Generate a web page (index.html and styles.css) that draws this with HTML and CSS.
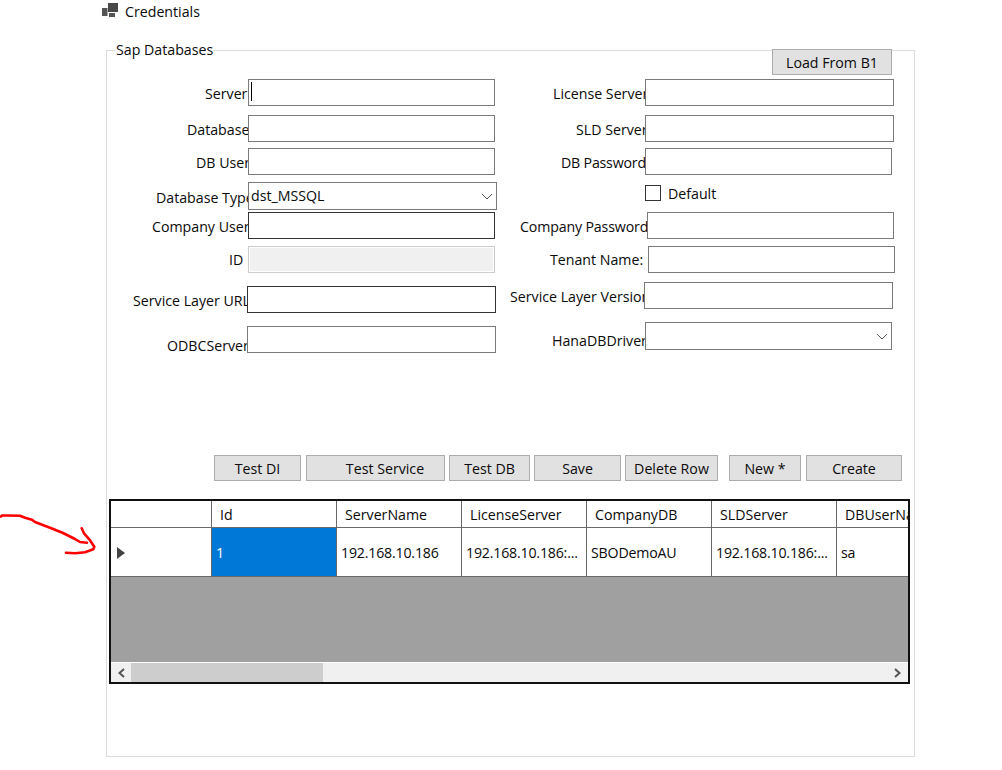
FILE: index.html
```html
<!DOCTYPE html>
<html lang="en">
<head>
<meta charset="utf-8">
<title>Credentials</title>
<link rel="stylesheet" href="styles.css">
</head>
<body>
<header class="title">
  <svg class="title-icon" width="16" height="15" viewBox="0 0 16 15"><path fill="#484848" d="M6 0h10v9H6z"/><path fill="#555" d="M0 5h5.500v8H0z"/><path fill="#555" d="M7 10h6v4H7z"/></svg>
  <span>Credentials</span>
</header>
<fieldset class="group">
  <legend>Sap Databases</legend>
  <div class="form">
    <div class="col col-left">
      <div class="row r-server"><label class="lbl">Server</label><input class="field"><span class="caret"></span></div>
      <div class="row r-database"><label class="lbl">Database</label><input class="field"></div>
      <div class="row r-dbuser"><label class="lbl">DB User</label><input class="field"></div>
      <div class="row r-type"><label class="lbl">Database Type</label><div class="field select"><span>dst_MSSQL</span><svg width="12" height="7" viewBox="0 0 12 7"><path d="M1 1l5 5 5-5" fill="none" stroke="#555" stroke-width="1"/></svg></div></div>
      <div class="row r-cuser"><label class="lbl">Company User</label><input class="field dark"></div>
      <div class="row r-id"><label class="lbl">ID</label><input class="field off" disabled></div>
      <div class="row r-url"><label class="lbl">Service Layer URL</label><input class="field dark"></div>
      <div class="row r-odbc"><label class="lbl">ODBCServer</label><input class="field"></div>
    </div>
    <div class="col col-right">
      <button class="btn load">Load From B1</button>
      <div class="row r-license"><label class="lbl">License Server</label><input class="field"></div>
      <div class="row r-sld"><label class="lbl">SLD Server</label><input class="field"></div>
      <div class="row r-dbpass"><label class="lbl">DB Password</label><input class="field"></div>
      <div class="check"><span class="box"></span><span class="check-text">Default</span></div>
      <div class="row r-cpass"><label class="lbl">Company Password</label><input class="field"></div>
      <div class="row r-tenant"><label class="lbl">Tenant Name:</label><input class="field"></div>
      <div class="row r-version"><label class="lbl">Service Layer Version</label><input class="field"></div>
      <div class="row r-hana"><label class="lbl">HanaDBDriver</label><div class="field select"><span></span><svg width="12" height="7" viewBox="0 0 12 7"><path d="M1 1l5 5 5-5" fill="none" stroke="#555" stroke-width="1"/></svg></div></div>
    </div>
  </div>
  <div class="actions">
    <button class="btn b-di">Test DI</button>
    <button class="btn b-service">Test Service</button>
    <button class="btn b-db">Test DB</button>
    <button class="btn b-save">Save</button>
    <button class="btn b-delete">Delete Row</button>
    <button class="btn b-new">New *</button>
    <button class="btn b-create">Create</button>
  </div>
  <div class="grid">
    <div class="grid-row head">
      <div class="cell rh"></div>
      <div class="cell">Id</div>
      <div class="cell">ServerName</div>
      <div class="cell">LicenseServer</div>
      <div class="cell">CompanyDB</div>
      <div class="cell">SLDServer</div>
      <div class="cell last">DBUserName</div>
    </div>
    <div class="grid-row data">
      <div class="cell rh"><span class="current"></span></div>
      <div class="cell selected">1</div>
      <div class="cell">192.168.10.186</div>
      <div class="cell">192.168.10.186:...</div>
      <div class="cell">SBODemoAU</div>
      <div class="cell">192.168.10.186:...</div>
      <div class="cell last">sa</div>
    </div>
    <div class="grid-empty"></div>
    <div class="hscroll">
      <span class="sb-btn"><svg width="9" height="10" viewBox="0 0 9 10"><path d="M7 1L2.500 5 7 9" fill="none" stroke="#555" stroke-width="2"/></svg></span>
      <span class="thumb"></span>
      <span class="sb-btn"><svg width="9" height="10" viewBox="0 0 9 10"><path d="M2 1l4.500 4L2 9" fill="none" stroke="#555" stroke-width="2"/></svg></span>
    </div>
  </div>
</fieldset>
<svg class="annotation" width="100" height="50" viewBox="0 0 100 50"><path d="M1 5.500 2 4.500 7 4.500 20 4.700 25 6.700 32 8.700 35 11 50 16.700 63 22 75 28 80 31 87 31.700M81.700 17.300 84 22.300 89.300 28.300 94.300 35.700 93.300 38.300 85 41.300 75 42.300 66 41.700" fill="none" stroke="#f00" stroke-width="2.600" stroke-linecap="round" stroke-linejoin="round"/></svg>
</body>
</html>
```
FILE: styles.css
```css
* { box-sizing: border-box; }
html, body { margin: 0; padding: 0; }
body {
  position: relative;
  width: 1002px;
  height: 770px;
  overflow: hidden;
  background: #fff;
  color: #0a0a0a;
  font: 14.200px/20px "Open Sans", "Noto Sans", sans-serif;
}
.title {
  display: flex;
  align-items: center;
  gap: 7px;
  height: 24px;
  margin-bottom: 16px;
  padding-left: 102px;
}
.title-icon { margin-top: -3px; }
.group {
  width: 809px;
  height: 717px;
  margin: 0 0 0 106px;
  padding: 0;
  min-inline-size: 0;
  border: 1px solid #dcdcdc;
}
.group legend { margin-left: 8px; padding: 0 1px; height: 20px; line-height: 20px; }
.form { display: flex; }
.col { flex: none; }
.col-left { width: 398px; }
.col-right { width: 400px; }
.row {
  position: relative;
  display: flex;
  align-items: flex-start;
  height: 27px;
  margin-top: var(--mt);
}
.lbl {
  flex: none;
  width: var(--lw);
  padding-left: var(--lp);
  padding-top: var(--lt);
  overflow: hidden;
  white-space: nowrap;
}
.field {
  flex: none;
  display: block;
  width: var(--fw, 247px);
  height: 27px;
  margin: 0;
  padding: 0;
  background: #fff;
  border: 1px solid #7a7a7a;
  border-radius: 0;
  outline: 0;
  font: inherit;
}
.field.dark { border-color: #333; }
.field.off { background: #f0f0f0; border-color: #ccc; box-shadow: inset 0 0 0 1px #fff; }
.select {
  display: flex;
  align-items: center;
  justify-content: space-between;
  height: 28px;
  padding: 0 3px 0 2px;
}
.select svg { margin-top: 1px; }
.caret { position: absolute; left: 144px; top: 3px; width: 1px; height: 19px; background: #000; }

.r-server   { --mt: 19px; --lw: 141px; --lp: 98px;  --lt: 5px; }
.r-database { --mt: 9px;  --lw: 141px; --lp: 80px;  --lt: 5px; }
.r-dbuser   { --mt: 6px;  --lw: 141px; --lp: 89px;  --lt: 5px; }
.r-type     { --mt: 7px;  --lw: 141px; --lp: 49px;  --lt: 6px; --fw: 249px; height: 28px; }
.r-cuser    { --mt: 2px;  --lw: 141px; --lp: 45px;  --lt: 5px; }
.r-id       { --mt: 7px;  --lw: 141px; --lp: 122px; --lt: 4px; }
.r-url      { --mt: 13px; --lw: 140px; --lp: 26px;  --lt: 5px; --fw: 249px; }
.r-odbc     { --mt: 13px; --lw: 140px; --lp: 60px;  --lt: 10px; --fw: 249px; }

.r-license  { --mt: 4px;  --lw: 140px; --lp: 48px;  --lt: 5px; --fw: 249px; }
.r-sld      { --mt: 9px;  --lw: 140px; --lp: 71px;  --lt: 5px; --fw: 249px; }
.r-dbpass   { --mt: 6px;  --lw: 140px; --lp: 56px;  --lt: 5px; --fw: 247px; letter-spacing: -0.2px; }
.r-cpass    { --mt: 11px; --lw: 142px; --lp: 15px;  --lt: 5px; --fw: 247px; letter-spacing: -0.15px; }
.r-tenant   { --mt: 7px;  --lw: 143px; --lp: 45px;  --lt: 4px; --fw: 247px; }
.r-version  { --mt: 9px;  --lw: 139px; --lp: 5px;   --lt: 5px; --fw: 249px; }
.r-hana     { --mt: 13px; --lw: 140px; --lp: 47px;  --lt: 9px; --fw: 247px; height: 28px; }

.check {
  display: flex;
  align-items: center;
  gap: 7px;
  height: 16px;
  margin: 10px 0 0 140px;
}
.check-text { padding-top: 2px; }
.box { width: 16px; height: 16px; border: 1px solid #333; background: #fff; }

.btn {
  display: block;
  height: 26px;
  padding: 2px 0 0;
  background: #e1e1e1;
  border: 1px solid #adadad;
  border-radius: 0;
  color: inherit;
  font: inherit;
}
.load { width: 120px; margin: -11px 0 0 267px; }
.actions { display: flex; gap: 4px; margin: 102px 0 0 107px; }
.b-di { width: 87px; margin-right: 1px; }
.b-service { width: 139px; padding-left: 19px; }
.b-db { width: 81px; }
.b-save { width: 87px; }
.b-delete { width: 93px; }
.b-new { width: 72px; margin-left: 7px; margin-right: 1px; }
.b-create { width: 96px; }

.grid {
  display: flex;
  flex-direction: column;
  width: 801px;
  height: 185px;
  margin: 18px 0 0 2px;
  border: 2px solid #111;
  overflow: hidden;
}
.grid-row { display: flex; flex: none; background: #fff; }
.head { height: 27px; }
.data { height: 49px; }
.cell {
  flex: none;
  display: flex;
  align-items: center;
  width: 125px;
  padding: 2px 0 0 4px;
  border-right: 1px solid #696969;
  border-bottom: 1px solid #696969;
  white-space: nowrap;
  overflow: hidden;
}
.head .cell { padding-left: 8px; }
.data .cell { letter-spacing: -0.2px; }
.rh { width: 101px; }
.cell.last { width: 80px; border-right: 0; }
.selected { background: #0078d7; color: #fff; }
.current {
  width: 0;
  height: 0;
  margin: 0 0 0 2px;
  border-style: solid;
  border-width: 6px 0 6px 8px;
  border-color: transparent transparent transparent #444;
}
.grid-empty { flex: 1; background: #a0a0a0; }
.hscroll {
  display: flex;
  flex: none;
  height: 20px;
  background: #f0f0f0;
  border-top: 1px solid #fff;
}
.sb-btn { display: flex; align-items: center; justify-content: center; flex: none; width: 20px; }
.sb-btn:last-child { margin-left: auto; width: 21px; }
.thumb { flex: none; width: 192px; background: #cdcdcd; }

.annotation { position: absolute; left: 0; top: 511px; }
```
